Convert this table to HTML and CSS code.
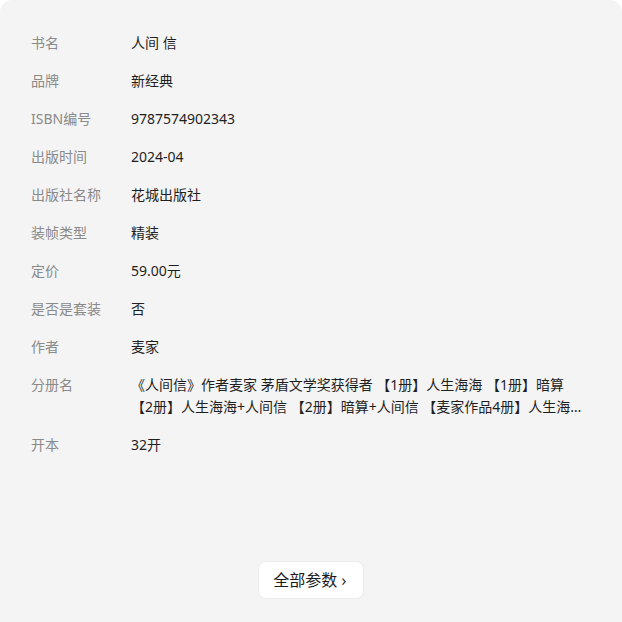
FILE: index.html
```html
<!DOCTYPE html>
<html lang="zh-CN">

<head>
    <meta charset="utf-8">
    <meta name="viewport" content="width=device-width, initial-scale=1.0">
    <title>商品参数</title>
    <link rel="stylesheet" href="styles.css">
</head>

<body>
    <section class="params">
        <dl class="liste">
            <div class="rad">
                <dt>书名</dt>
                <dd>人间 信</dd>
            </div>
            <div class="rad">
                <dt>品牌</dt>
                <dd>新经典</dd>
            </div>
            <div class="rad">
                <dt>ISBN编号</dt>
                <dd>9787574902343</dd>
            </div>
            <div class="rad">
                <dt>出版时间</dt>
                <dd>2024-04</dd>
            </div>
            <div class="rad">
                <dt>出版社名称</dt>
                <dd>花城出版社</dd>
            </div>
            <div class="rad">
                <dt>装帧类型</dt>
                <dd>精装</dd>
            </div>
            <div class="rad">
                <dt>定价</dt>
                <dd>59.00元</dd>
            </div>
            <div class="rad">
                <dt>是否是套装</dt>
                <dd>否</dd>
            </div>
            <div class="rad">
                <dt>作者</dt>
                <dd>麦家</dd>
            </div>
            <div class="rad">
                <dt>分册名</dt>
                <dd class="klip">
                    <span class="linje">《人间信》作者麦家 茅盾文学奖获得者 【1册】人生海海 【1册】暗算</span>
                    <span class="linje sidste">【2册】人生海海+人间信 【2册】暗算+人间信 【麦家作品4册】人生海海+暗算</span>
                </dd>
            </div>
            <div class="rad">
                <dt>开本</dt>
                <dd>32开</dd>
            </div>
        </dl>

        <div class="knap-boks">
            <button class="alle">全部参数<span class="pil">›</span></button>
        </div>
    </section>
</body>

</html>
```

FILE: styles.css
```css
html,
body {
    margin: 0;
    background-color: #ffffff;
}

body {
    font-family: "Noto Sans", "Noto Sans CJK SC", sans-serif;
}

.params {
    background-color: #f4f4f4;
    border-radius: 12px 12px 0 0;
    height: 622px;
    box-sizing: border-box;
    padding: 32px 31px 0 31px;
    display: flex;
    flex-direction: column;
}

.liste {
    margin: 0;
    display: flex;
    flex-direction: column;
    gap: 16px;
}

.rad {
    display: flex;
    font-size: 14px;
    line-height: 22px;
}

.rad dt {
    width: 100px;
    flex-shrink: 0;
    color: #8a8a8a;
}

.rad dd {
    margin: 0;
    color: #1f1f1f;
    flex: 1;
    min-width: 0;
}

.klip {
    max-width: 460px;
}

.linje {
    display: block;
}

.sidste {
    white-space: nowrap;
    overflow: hidden;
    text-overflow: ellipsis;
}

.knap-boks {
    margin-top: auto;
    padding-bottom: 23px;
    display: flex;
    justify-content: center;
}

.alle {
    font-family: "Noto Sans", "Noto Sans CJK SC", sans-serif;
    font-size: 16px;
    line-height: 22px;
    color: #1a1a1a;
    background-color: #ffffff;
    border: 1px solid #ececec;
    border-radius: 8px;
    padding: 7px 16px 7px 14px;
    display: flex;
    align-items: center;
    gap: 4px;
}

.pil {
    font-size: 17px;
    color: #333333;
}
```
